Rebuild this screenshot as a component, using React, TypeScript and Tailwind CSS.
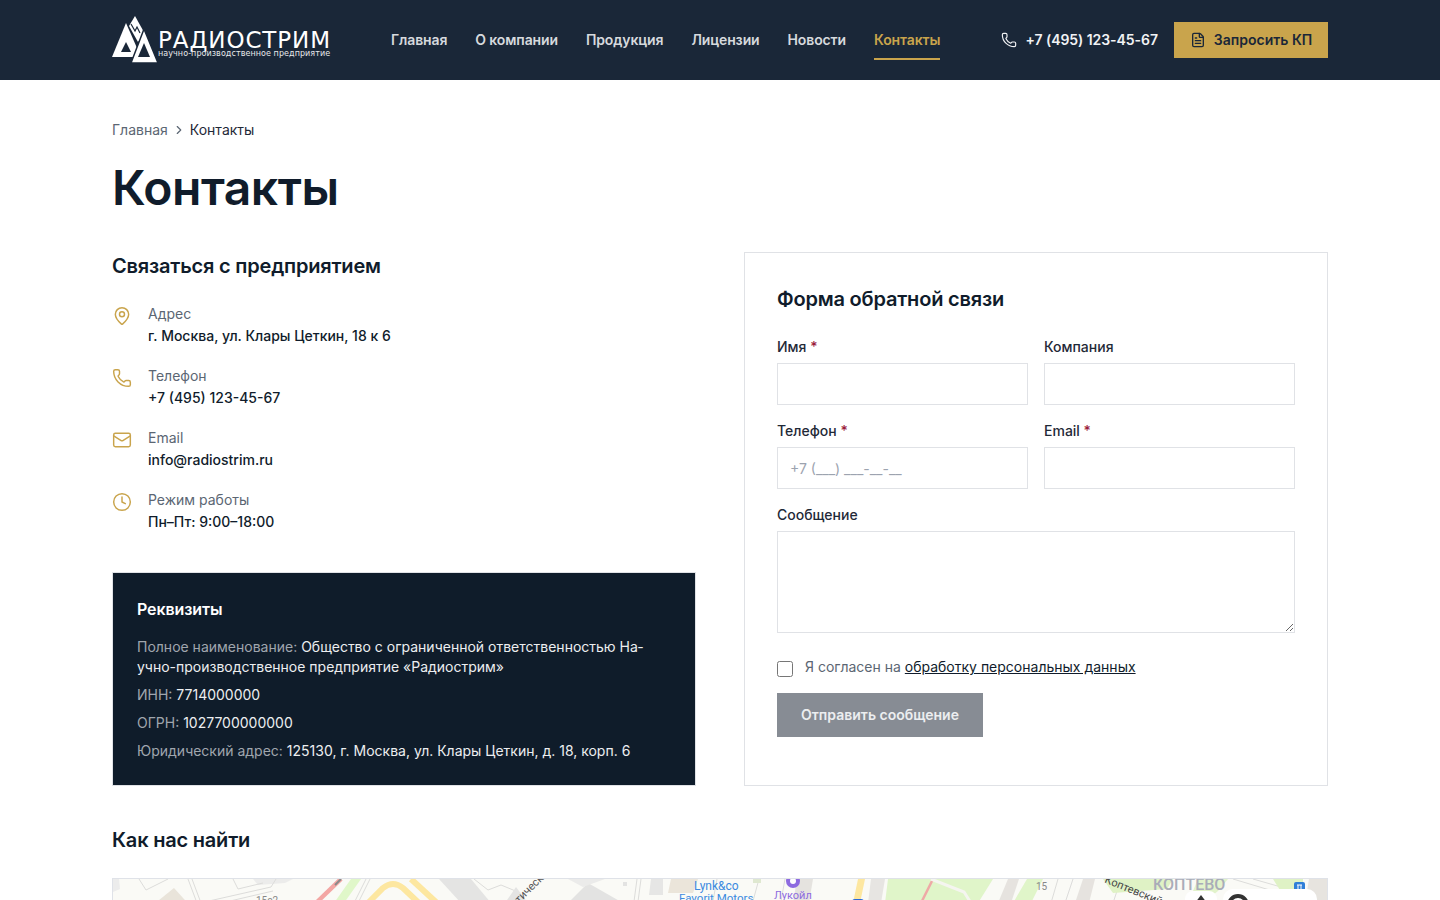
import { Clock, FileText, Mail, MapPin, Phone, ChevronRight } from "lucide-react";

const navItems = ["Главная", "О компании", "Продукция", "Лицензии", "Новости", "Контакты"];

const contacts = [
  { icon: MapPin, label: "Адрес", value: "г. Москва, ул. Клары Цеткин, 18 к 6" },
  { icon: Phone, label: "Телефон", value: "+7 (495) 123-45-67" },
  { icon: Mail, label: "Email", value: "info@radiostrim.ru" },
  { icon: Clock, label: "Режим работы", value: "Пн–Пт: 9:00–18:00" },
];

function Logo() {
  return (
    <div className="flex items-start w-[220px] h-12">
      <svg width="46" height="48" viewBox="0 0 46 48" className="shrink-0">
        {/* centre peak */}
        <path d="M23 0 L33 18 L26 26 L17 10 Z" fill="#fff" />
        <path d="M19 8 L23 15 L25 11 L28 17" stroke="#1a2738" strokeWidth="1.2" fill="none" />
        {/* left peak */}
        <path d="M14 7 L29 41 H0 Z" fill="#fff" />
        <path d="M14 26 L9 36 H19 Z" fill="#1a2738" />
        {/* right peak */}
        <path d="M32 13 L46 47 H19 Z" fill="#fff" stroke="#1a2738" strokeWidth="1.5" />
        <path d="M32 27 L26 41 H38 Z" fill="#1a2738" />
      </svg>
      <div className="mt-[15px] flex flex-col">
        <span className="text-[23px] leading-[18px] font-['DejaVu_Sans'] text-white tracking-[0.9px] whitespace-nowrap">РАДИОСТРИМ</span>
        <span className="mt-[2px] text-[8px] leading-[6px] font-['DejaVu_Sans'] text-[#e8e9eb] tracking-[0.07px] whitespace-nowrap">научно-производственное предприятие</span>
      </div>
    </div>
  );
}

function Header() {
  return (
    <header className="h-20 bg-[#1a2738]">
      <div className="w-[1216px] h-full mx-auto flex items-center">
        <Logo />
        <nav className="ml-[59px] flex gap-7 h-full items-center">
          {navItems.map((item) => (
            <a
              key={item}
              className={
                item === "Контакты"
                  ? "h-10 flex items-center text-sm font-semibold tracking-[-0.12px] text-[#c9a44c] border-b-2 border-[#c9a44c] pt-[2px]"
                  : "h-10 flex items-center text-sm font-semibold tracking-[-0.12px] text-[#d6d9dd]"
              }
            >
              {item}
            </a>
          ))}
        </nav>
        <div className="ml-auto flex items-center gap-2 text-sm font-semibold tracking-[-0.05px] text-[#f1f2f4]">
          <Phone size={16} strokeWidth={1.75} />
          <span>+7 (495) 123-45-67</span>
        </div>
        <button className="ml-4 w-[154px] h-9 bg-[#c9a44c] flex items-center justify-center gap-2 text-sm font-semibold text-[#1a2738]">
          <FileText size={16} strokeWidth={2} />
          Запросить КП
        </button>
      </div>
    </header>
  );
}

function Req({ name, value }: { name: string; value: string }) {
  return (
    <p className="text-sm leading-5 mb-2 last:mb-0">
      <span className="text-[#a0a6ae]">{name}: </span>
      <span className="text-[#eceef0]">{value}</span>
    </p>
  );
}

function Field({ label, required, placeholder }: { label: string; required?: boolean; placeholder?: string }) {
  return (
    <label className="block">
      <span className="block text-sm leading-5 font-medium text-[#1f2937] mb-1.5">
        {label}
        {required && <span className="text-[#9b1c3c]"> *</span>}
      </span>
      <input
        placeholder={placeholder}
        className="w-full h-[42px] border border-[#e0e2e6] px-3 text-sm outline-none placeholder:text-[#9ca3af]"
      />
    </label>
  );
}

function MapPreview() {
  return (
    <div className="relative mt-6 h-[400px] border border-[#dfe2e8] overflow-hidden bg-[#fafaf6]">
      <svg width="1214" height="398" viewBox="0 0 1214 398" className="block">
        <path d="M0 0 H6 L7 10 L0 13 Z" fill="#ececec" />
        <path d="M35 30 L61 9 L80 30 Z" fill="#e9e4da" />
        <path d="M180 0 H140 L145 6 L172 4 Z" fill="#ececeb" />
        <g stroke="#dcdcda" strokeWidth="1" fill="none">
          <path d="M26 0 L33 11 L55 0" />
          <path d="M75 0 L84 24 M79 0 L88 24" />
          <path d="M96 22 L158 8 L163 0 M100 26 L160 12" />
          <path d="M120 0 L125 10 L150 4" />
          <path d="M241 24 L253 0 M245 24 L257 0" />
          <path d="M361 0 L375 11 L388 6 L405 13" />
          <path d="M520 30 L524 0 M524 30 L528 0" />
          <path d="M600 22 L604 0 M640 22 L646 0 M668 22 L672 0" />
          <path d="M818 0 L851 13 L858 24 M816 4 L848 18" />
          <path d="M938 24 L945 0 M952 24 L960 0 M1000 24 L1008 0" />
          <path d="M1120 0 L1160 12 M1140 0 L1175 10" />
        </g>
        {/* rail line */}
        <path d="M203 24 L228 0" stroke="#f3a7a4" strokeWidth="4.5" fill="none" />
        <path d="M222 6 L228 0" stroke="#8a8a8a" strokeWidth="2" fill="none" />
        <path d="M221 24 L238 0 H248 L231 24 Z" fill="#e0f7c9" />
        {/* yellow ring road */}
        <path d="M255 24 L270 9 Q280 1 290 9 L308 26" stroke="#fde7a0" strokeWidth="6" fill="none" />
        <path d="M298 0 L324 24" stroke="#fde7a0" strokeWidth="6" fill="none" />
        {/* grey blocks */}
        <path d="M326 0 H358 L378 24 H348 Z" fill="#e4e4e3" />
        <path d="M392 24 L403 8 L415 24 Z" fill="#e4e4e3" />
        <path d="M455 24 L475 4 L510 24 Z" fill="#e3e3e2" />
        <path d="M455 0 H492 L470 8 Z" fill="#ebebea" />
        <rect x="510" y="3" width="4" height="4" fill="#e3e3e2" />
        <path d="M538 0 H550 V16 H536 Z" fill="#e6e6e5" />
        <path d="M558 0 H585 L580 14 H555 Z" fill="#ebe5da" />
        <path d="M640 0 H648 V4 H640 Z" fill="#dfe8d0" />
        <path d="M680 24 L684 0 H700 L696 24 Z" fill="#e5e3df" />
        {/* yellow street */}
        <path d="M745 0 H752 L747 24 H740 Z" fill="#fde7a0" />
        <path d="M758 0 H772 L768 24 H755 Z" fill="#e7e5e2" />
        {/* park */}
        <path d="M775 0 H880 L865 24 H772 Z" fill="#e0f5c9" />
        <path d="M808 24 L820 0" stroke="#eea9a6" strokeWidth="2.5" fill="none" />
        <path d="M818 0 L851 13 L858 24" stroke="#f5f5f0" strokeWidth="3" fill="none" />
        <path d="M885 24 L895 0 H906 L898 24 Z" fill="#e6e3df" />
        <path d="M900 24 L914 0 H930 L918 24 Z" fill="#e0f5c9" />
        <path d="M962 24 L970 0 H982 L976 24 Z" fill="#e6e3df" />
        <path d="M990 0 H1060 L1054 10 L1000 14 Z" fill="#dff2c5" />
        <path d="M1075 24 L1085 0 H1115 L1105 12 L1090 24 Z" fill="#e2f3cb" />
        <path d="M1160 0 H1190 V24 H1175 Z" fill="#dff2c5" />
        <path d="M1196 0 H1214 V24 H1192 Z" fill="#e7e4df" />
        {/* lukoil pin */}
        <circle cx="680" cy="2" r="7" fill="#8d6be0" />
        <circle cx="680" cy="2" r="3" fill="#fff" />
        {/* metro badge */}
        <rect x="1181" y="3" width="11" height="9" rx="2" fill="#2f7fd8" />
        <path d="M1184 6 H1189 M1185 6 V11 M1188 6 V11" stroke="#fff" strokeWidth="1" />
        {/* parking badge */}
        <rect x="739" y="20" width="12" height="10" rx="3" fill="#2a68d8" />
      </svg>
      <span className="absolute left-[581px] top-[0px] text-xs leading-[14px] text-[#3c8ae0] font-['Roboto'] whitespace-nowrap">Lynk&amp;co</span>
      <span className="absolute left-[566px] top-[12px] text-[11.5px] leading-[14px] text-[#3c8ae0] font-['Roboto'] whitespace-nowrap">Favorit Motors</span>
      <span className="absolute left-[661px] top-[10px] text-[11px] leading-[14px] text-[#8d6be0] font-['Roboto'] whitespace-nowrap">Лукойл</span>
      <span className="absolute left-[399px] top-[4px] text-[11px] leading-3 text-[#555] font-['Roboto'] -rotate-45 whitespace-nowrap">тическ</span>
      <span className="absolute left-[143px] top-[16px] text-[10px] leading-3 text-[#888] font-['Roboto'] whitespace-nowrap">15с2</span>
      <span className="absolute left-[923px] top-[2px] text-[10px] leading-3 text-[#888] font-['Roboto']">15</span>
      <span className="absolute left-[990px] top-[5px] text-[11px] leading-[14px] text-[#444] font-['Roboto'] rotate-[22deg] whitespace-nowrap">Коптевский</span>
      <span className="absolute left-[1040px] top-[-4px] text-base leading-5 font-medium text-[#a9acb8] font-['Roboto'] whitespace-nowrap">КОПТЕВО</span>
      <div className="absolute left-[1072px] top-[12px] w-8 h-10 rounded-lg bg-white flex justify-center pt-1">
        <svg width="12" height="8" viewBox="0 0 12 8"><path d="M6 0 L12 8 H0 Z" fill="#333" /></svg>
      </div>
      <div className="absolute left-[1110px] top-[10px] w-[94px] h-10 rounded-[10px] bg-white">
        <div className="absolute left-[4px] top-[5px] w-[22px] h-[22px] rounded-full border-[4px] border-[#333]" />
      </div>
    </div>
  );
}

export default function App() {
  return (
    <div className="bg-white font-['Inter',sans-serif] text-[#101c2b]">
      <Header />
      <main className="w-[1216px] mx-auto pb-12">
        <div className="pt-10 flex items-center gap-1 text-sm leading-5">
          <span className="text-[#5b6673]">Главная</span>
          <ChevronRight size={14} className="text-[#5b6673]" />
          <span className="text-[#1f2937]">Контакты</span>
        </div>
        <h1 className="mt-[19px] text-[48px] leading-[58px] font-semibold tracking-[-0.5px] text-[#101c2b]">Контакты</h1>

        <div className="mt-[35px] grid grid-cols-2 gap-12">
          <div>
            <h2 className="text-xl leading-7 font-semibold tracking-[-0.2px]">Связаться с предприятием</h2>
            <div className="mt-[23px] flex flex-col gap-[18px]">
              {contacts.map((c) => (
                <div key={c.label} className="flex gap-4">
                  <c.icon size={20} strokeWidth={1.75} className="text-[#c9a44c] mt-[3px] shrink-0" />
                  <div>
                    <div className="text-sm leading-[22px] text-[#5b6673]">{c.label}</div>
                    <div className="text-sm leading-[22px] font-medium text-[#101c2b]">{c.value}</div>
                  </div>
                </div>
              ))}
            </div>
            <div className="mt-[39px] h-[214px] bg-[#0f1c2a] border border-[#e0e2e6] px-6 py-6">
              <h3 className="text-base leading-6 font-semibold tracking-[-0.1px] text-white mb-4">Реквизиты</h3>
              <Req name="Полное наименование" value="Общество с ограниченной ответственностью На­учно-производственное предприятие «Радиострим»" />
              <Req name="ИНН" value="7714000000" />
              <Req name="ОГРН" value="1027700000000" />
              <Req name="Юридический адрес" value="125130, г. Москва, ул. Клары Цеткин, д. 18, корп. 6" />
            </div>
          </div>

          <form className="h-[534px] border border-[#e0e2e6] px-8 pt-8">
            <h2 className="text-xl leading-7 font-semibold tracking-[-0.2px]">Форма обратной связи</h2>
            <div className="mt-6 grid grid-cols-2 gap-x-4 gap-y-4">
              <Field label="Имя" required />
              <Field label="Компания" />
              <Field label="Телефон" required placeholder="+7 (___) ___-__-__" />
              <Field label="Email" required />
              <label className="block col-span-2">
                <span className="block text-sm leading-5 font-medium text-[#1f2937] mb-1.5">Сообщение</span>
                <textarea className="block w-full h-[102px] border border-[#e0e2e6] px-3 py-2 text-sm outline-none" />
              </label>
            </div>
            <label className="mt-6 flex items-center gap-3 text-sm leading-5 text-[#5b6673]">
              <input type="checkbox" className="w-4 h-4 mt-[3px] m-0" />
              <span>
                Я согласен на <a className="text-[#101c2b] underline">обработку персональных данных</a>
              </span>
            </label>
            <button type="button" className="mt-4 w-[206px] h-11 bg-[#878c94] text-sm font-semibold text-[#eceef0]">
              Отправить сообщение
            </button>
          </form>
        </div>

        <h2 className="mt-10 text-xl leading-7 font-semibold tracking-[-0.2px]">Как нас найти</h2>
        <MapPreview />
      </main>
    </div>
  );
}
